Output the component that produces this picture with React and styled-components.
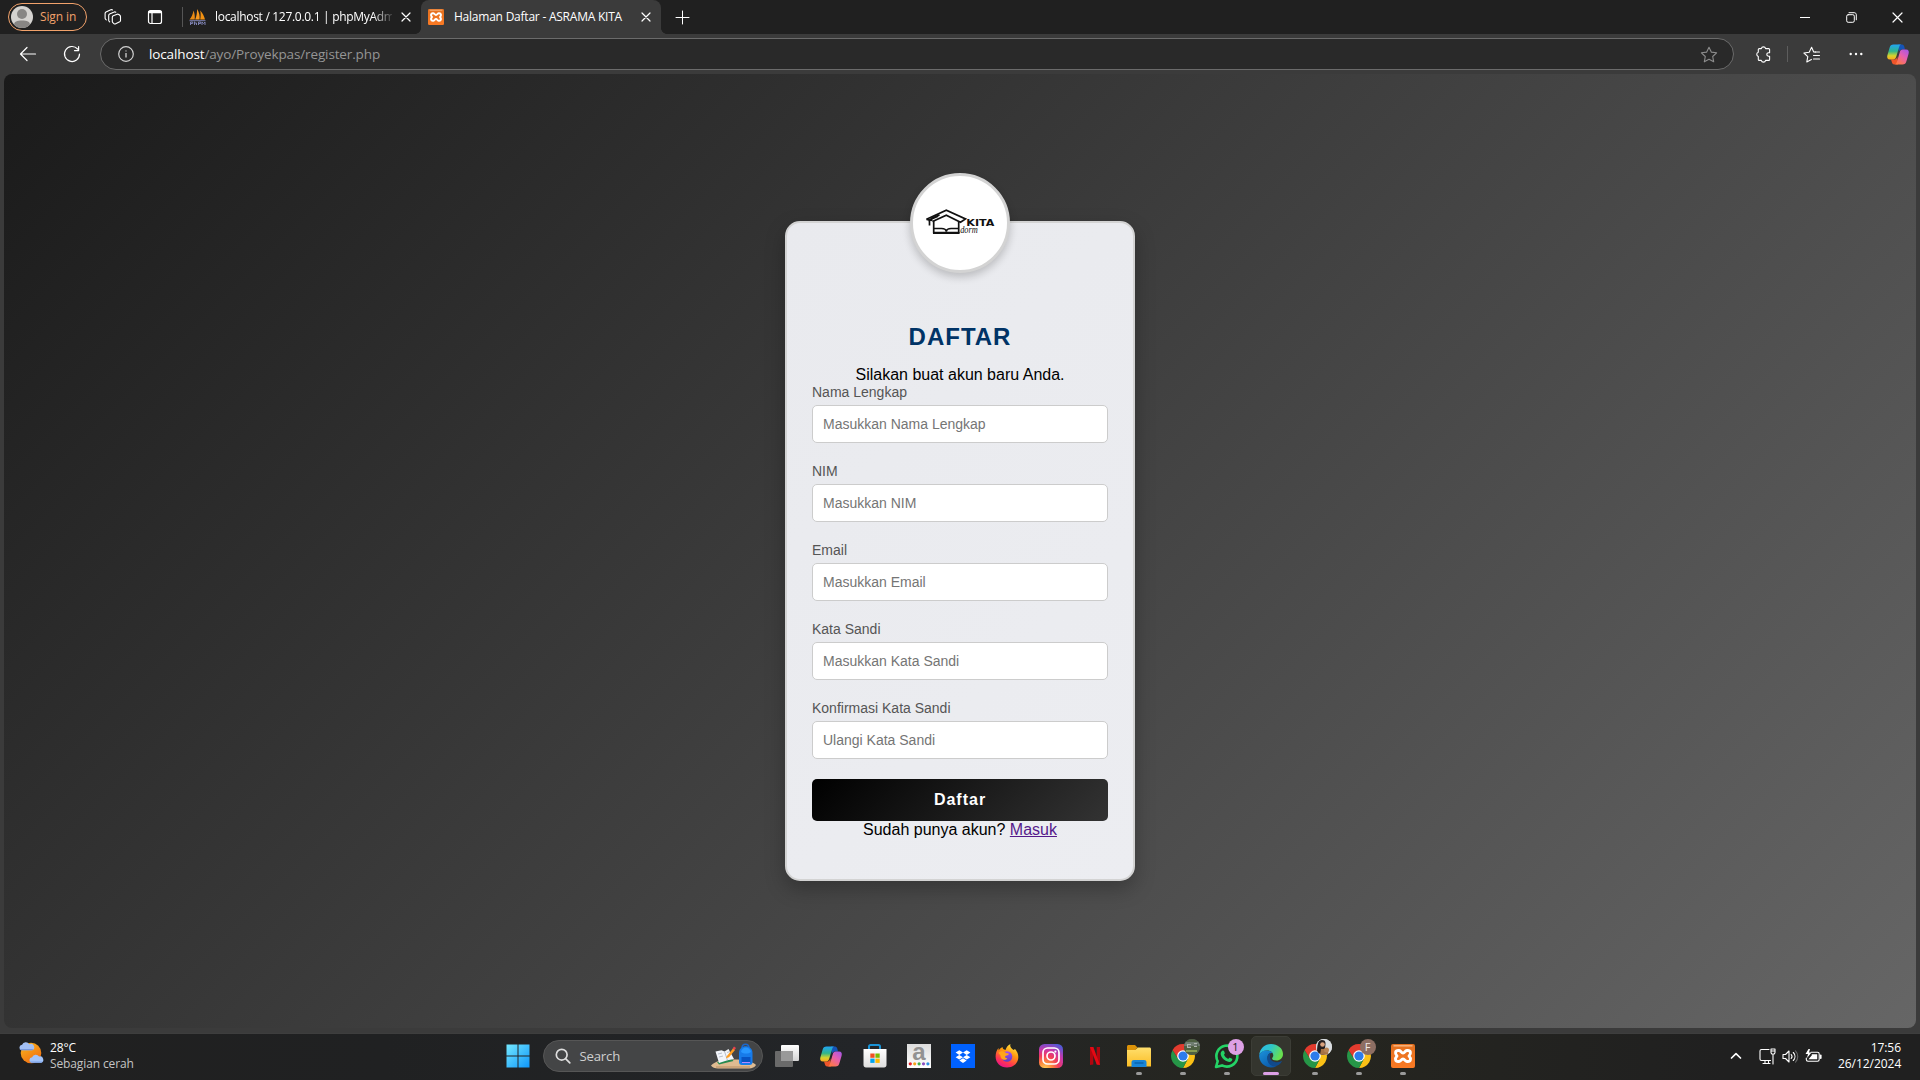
import React from "react";
import styled, { createGlobalStyle, css } from "styled-components";

const Global = createGlobalStyle`
  * { box-sizing: border-box; }
  html, body { margin: 0; padding: 0; }
  body { background: #3b3b3b; overflow: hidden; }
  svg { display: block; flex: none; overflow: visible; }
`;

const ui = css`
  font-family: "Open Sans", "Noto Sans", sans-serif;
`;

const Screen = styled.div`
  width: 1920px;
  height: 1080px;
  display: flex;
  flex-direction: column;
  background: #3b3b3b;
  overflow: hidden;
  ${ui}
`;

/* ---------- Title bar ---------- */
const TitleBar = styled.header`
  height: 34px;
  flex: none;
  display: flex;
  align-items: center;
  background: #202020;
  color: #fff;
`;
const SignIn = styled.button`
  width: 79px;
  height: 28px;
  margin-left: 8px;
  padding: 0 0 0 2px;
  display: flex;
  align-items: center;
  gap: 7px;
  border: 1px solid #f2a26b;
  border-radius: 14px;
  background: transparent;
  color: #f2a26b;
  font-size: 12px;
  letter-spacing: -0.12px;
  line-height: 16px;
  white-space: nowrap;
  ${ui}
`;
const BarIcon = styled.div`
  width: ${(p) => p.$w}px;
  height: 100%;
  flex: none;
  display: flex;
  align-items: center;
  justify-content: center;
`;
const TabDivider = styled.div`
  width: 1px;
  height: 20px;
  margin-left: 11px;
  background: #555;
`;
const Tab = styled.div`
  height: 34px;
  width: ${(p) => p.$w}px;
  flex: none;
  display: flex;
  align-items: center;
  padding: 0 ${(p) => p.$pr}px 0 ${(p) => p.$pl}px;
  border-radius: 8px 8px 0 0;
  background: ${(p) => (p.$active ? "#3b3b3b" : "transparent")};
  gap: ${(p) => p.$gap}px;
`;
const TabFlare = styled.div`
  width: 6px;
  height: 34px;
  flex: none;
  background: radial-gradient(circle at ${(p) => (p.$left ? "0 28px" : "6px 28px")}, #202020 5.6px, #3b3b3b 6.2px);
  clip-path: inset(28px 0 0 0);
`;
const TabTitle = styled.span`
  flex: 1;
  min-width: 0;
  white-space: nowrap;
  font-size: 12px;
  line-height: 16px;
  letter-spacing: ${(p) => p.$ls}px;
  color: #fff;
  ${(p) => p.$fade && css`mask-image: linear-gradient(90deg, #000 89%, rgba(0, 0, 0, 0.15));`}
`;
const WindowControls = styled.div`
  margin-left: auto;
  height: 100%;
  display: flex;
`;

/* ---------- Tool bar ---------- */
const ToolBar = styled.nav`
  height: 40px;
  flex: none;
  display: flex;
  align-items: center;
  padding-left: 6px;
  background: #3b3b3b;
`;
const Address = styled.div`
  width: 1634px;
  height: 32px;
  flex: none;
  margin-left: 6px;
  padding: 0 15px 0 17px;
  display: flex;
  align-items: center;
  border: 1px solid #6b6b6b;
  border-radius: 16px;
  background: #292929;
`;
const Url = styled.div`
  flex: 1;
  margin-left: 15px;
  font-size: 13.5px;
  line-height: 20px;
  letter-spacing: -0.13px;
  color: #959595;
  b { font-weight: 400; color: #fff; }
`;
const ToolDivider = styled.div`
  width: 1px;
  height: 16px;
  margin-left: -5px;
  background: #5d5d5d;
`;

/* ---------- Page ---------- */
const Frame = styled.div`
  height: 959px;
  flex: none;
  padding: 0 4px 5px;
`;
const Page = styled.main`
  height: 954px;
  display: flex;
  justify-content: center;
  align-items: center;
  border-radius: 8px;
  background: linear-gradient(135deg, #1a1a1a, #666666);
  font-family: "Liberation Sans", Arial, sans-serif;
`;
const Card = styled.section`
  position: relative;
  width: 350px;
  height: 660px;
  padding: 100px 25px 40px;
  border: 2px solid #d3d3d3;
  border-radius: 15px;
  background: linear-gradient(135deg, #e9eaee, #ecedf1);
  box-shadow: 0 8px 20px rgba(0, 0, 0, 0.25);
  text-align: center;
`;
const Logo = styled.div`
  position: absolute;
  top: -50px;
  left: 50%;
  width: 100px;
  height: 100px;
  margin-left: -50px;
  border: 3px solid #d3d3d3;
  border-radius: 50%;
  background: #fff;
  box-shadow: 0 4px 8px rgba(0, 0, 0, 0.2);
`;
const Title = styled.h2`
  margin: 0 0 15px;
  font-size: 24px;
  line-height: 28px;
  letter-spacing: 1px;
  color: #003366;
`;
const Note = styled.p`
  margin: 0;
  font-size: 16px;
  line-height: 18px;
  color: #000;
  a { color: #551a8b; }
`;
const Field = styled.div`
  margin-bottom: 20px;
  text-align: left;
`;
const Label = styled.label`
  display: block;
  margin-bottom: 5px;
  font-size: 14px;
  line-height: 16px;
  color: #555;
`;
const Input = styled.input`
  display: block;
  width: 100%;
  height: 38px;
  padding: 10px;
  border: 1px solid #ccc;
  border-radius: 5px;
  background: #fff;
  font: 14px "Liberation Sans", Arial, sans-serif;
  &::placeholder { color: #757575; }
`;
const Submit = styled.button`
  display: block;
  width: 100%;
  height: 42px;
  padding: 12px;
  border: 0;
  border-radius: 5px;
  background: linear-gradient(135deg, #000, #333);
  color: #fff;
  font: bold 16px/18px "Liberation Sans", Arial, sans-serif;
  letter-spacing: 1px;
`;

/* ---------- Task bar ---------- */
const TaskBar = styled.footer`
  height: 47px;
  flex: none;
  display: grid;
  grid-template-columns: 1fr auto 1fr;
  background: linear-gradient(90deg, #202020 0%, #202122 20%, #232528 45%, #26261f 66%, #232320 78%, #202020 90%);
  box-shadow: inset 0 1px #3e3e3e;
  color: #fff;
`;
const Weather = styled.div`
  display: flex;
  padding: 8px 0 0 18px;
  gap: 6px;
  font-size: 12px;
  line-height: 16px;
  letter-spacing: -0.12px;
  span { display: block; }
  span + span { color: #c4c4c4; }
`;
const WeatherText = styled.div`
  margin-top: -1px;
`;
const Apps = styled.div`
  display: flex;
  height: 46px;
`;
const AppCell = styled.div`
  position: relative;
  width: 44px;
  height: 46px;
  display: flex;
  align-items: center;
  justify-content: center;
`;
const ActiveTile = styled.div`
  width: 40px;
  height: 40px;
  display: flex;
  align-items: center;
  justify-content: center;
  border: 1px solid #3c3d36;
  border-radius: 5px;
  background: #34352e;
`;
const RunDot = styled.i`
  position: absolute;
  left: 50%;
  bottom: 4px;
  width: ${(p) => (p.$active ? 16 : 6)}px;
  height: 3px;
  transform: translateX(-50%);
  border-radius: 2px;
  background: ${(p) => (p.$active ? "#dda0e5" : "#9a9a9a")};
`;
const Badge = styled.span`
  position: absolute;
  right: 5px;
  top: 6px;
  width: 16px;
  height: 16px;
  border-radius: 50%;
  background: ${(p) => p.$bg};
  color: ${(p) => p.$fg};
  font-size: 11px;
  line-height: 16px;
  text-align: center;
  overflow: hidden;
`;
const SearchBox = styled.div`
  width: 220px;
  height: 32px;
  margin: 7px 2px 0 3px;
  padding: 0 6px 0 11px;
  display: flex;
  align-items: center;
  border: 1px solid #565656;
  border-radius: 16px;
  background: #444546;
  color: #cfcfcf;
  font-size: 13.2px;
  letter-spacing: -0.2px;
  span { flex: 1; margin-left: 9px; }
`;
const Tray = styled.div`
  display: flex;
  justify-content: flex-end;
  align-items: center;
  padding: 0 19px 1px 0;
`;
const TrayIcons = styled.div`
  display: flex;
  align-items: center;
  gap: 6px;
  margin: 0 16px 0 17px;
`;
const Clock = styled.div`
  text-align: right;
  font-size: 12px;
  line-height: 16px;
  letter-spacing: -0.05px;
  width: 63px;
  white-space: nowrap;
`;

/* ---------- Icons ---------- */
const line = { fill: "none", stroke: "#fff", strokeWidth: 1.1, strokeLinecap: "round", strokeLinejoin: "round" };

const Close = ({ s = 8 }) => (
  <svg width={s + 2} height={s + 2} viewBox={`0 0 ${s + 2} ${s + 2}`} {...line} strokeWidth="1.2">
    <path d={`M1 1L${s + 1} ${s + 1}M${s + 1} 1L1 ${s + 1}`} />
  </svg>
);
const Avatar = () => (
  <svg width="22" height="22" viewBox="0 0 22 22">
    <clipPath id="av"><circle cx="11" cy="11" r="11" /></clipPath>
    <g clipPath="url(#av)">
      <rect width="22" height="22" fill="#d5d3d0" />
      <circle cx="11" cy="8" r="5" fill="#888684" />
      <path d="M3 19c0-3.600 3-4.500 8-4.500s8 .9 8 4.500l-3 3H6z" fill="#888684" />
    </g>
  </svg>
);
const Workspaces = () => (
  <svg width="18" height="18" viewBox="0 0 18 18" {...line}>
    <path d="M8.300 9.200c0-.7.300-1.100.9-1.400l4-1.600c.6-.2 1.100 0 1.600.3l1 .8c.5.400.7.8.7 1.400v3.800c0 .6-.3 1-.8 1.300l-4 2c-.6.3-1.100.2-1.600-.1l-1-.8c-.5-.4-.8-.8-.8-1.400z" />
    <path d="M5.700 13.900l-.5-.5c-.3-.3-.5-.7-.5-1.200V7.500c0-.7.300-1.200.9-1.500l4.600-2c.6-.3 1.100-.2 1.600.2" />
    <path d="M2.300 11.800l-.6-.5c-.4-.4-.6-.8-.6-1.300V5.500c0-.7.300-1.200.9-1.500l4.800-2.200c.6-.2 1.200-.2 1.700.2" />
  </svg>
);
const TabActions = () => (
  <svg width="16" height="16" viewBox="0 0 16 16" {...line} strokeWidth="1.200">
    <rect x="1.500" y="1.500" width="13" height="13" rx="2" />
    <path d="M2.500 3h11" strokeWidth="2.600" />
    <path d="M5 4v10" />
  </svg>
);
const PmaIcon = () => (
  <svg width="17" height="17" viewBox="0 0 17 17">
    <path d="M.5 10.500C2.500 8.500 4 5 4.500 1.500c1.200 3 1.600 6 1.200 9z" fill="#e98a14" />
    <path d="M6.200 10.500C7.500 7.500 8.200 3.500 8 0c2.200 3 3 7 2.600 10.500z" fill="#f8981d" />
    <path d="M11.200 10.500c.6-3 .6-6 0-9 2.300 2.600 4.200 6 4.800 9z" fill="#f29111" />
    <path d="M.5 11.700h16M1.500 16v-3h2.200v1.500H1.500M5.500 12.500V16M5.500 14h2v2M9.500 16v-3h2.200v1.500H9.500M13 16v-3l1.500 1.500L16 13v3" fill="none" stroke="#7d80b0" strokeWidth="1" />
  </svg>
);
const Xampp = ({ s }) => (
  <svg width={s} height={s} viewBox="0 0 24 24">
    <defs><linearGradient id="xa" x2="0" y2="1"><stop stopColor="#e2701f" /><stop offset="1" stopColor="#fb7a24" /></linearGradient></defs>
    <rect width="24" height="24" rx="2" fill="url(#xa)" />
    <path d="M2.500 1.800h19" stroke="#f8b27c" strokeWidth="1.500" />
    <path
      d="M8 6.500C4 6 3.600 9.500 6 12 3.600 14.500 4 18 8 17.500c2.400-.3 2-2.500 4-2.500s1.600 2.200 4 2.500c4 .5 4.400-3 2-5.500 2.400-2.500 2-6-2-5.500-2.400.3-2 2.500-4 2.500S10.400 6.800 8 6.500z"
      fill="none" stroke="#fff" strokeWidth="2.900" strokeLinejoin="round"
    />
  </svg>
);
const Plus = () => (
  <svg width="15" height="15" viewBox="0 0 15 15" {...line} strokeWidth="1"><path d="M7.500 1v13M1 7.500h13" /></svg>
);
const Minimize = () => (
  <svg width="10" height="10" viewBox="0 0 10 10"><path d="M0 5.500h10" stroke="#fff" /></svg>
);
const Restore = () => (
  <svg width="11" height="11" viewBox="0 0 11 11" {...line} strokeWidth="1">
    <rect x=".7" y="2.700" width="7.600" height="7.600" rx="1.500" />
    <path d="M3 .7h5.200c1.300 0 2.100.8 2.100 2.100v5" />
  </svg>
);
const Back = () => (
  <svg width="18" height="16" viewBox="0 0 18 16" {...line} strokeWidth="1.200"><path d="M8 1.500L1.500 8 8 14.500M1.500 8h15" /></svg>
);
const Reload = () => (
  <svg width="18" height="18" viewBox="0 0 18 18" {...line} strokeWidth="1.200">
    <path d="M16.500 9A7.500 7.500 0 1 1 14.600 4M15.600 1.500V5.600H11.500" />
  </svg>
);
const Info = () => (
  <svg width="16" height="16" viewBox="0 0 16 16" fill="none" stroke="#d2d2d2" strokeWidth="1.200">
    <circle cx="8" cy="8" r="7.300" /><path d="M8 7v4.500" strokeWidth="1.300" /><circle cx="8" cy="4.900" r=".6" fill="#d2d2d2" stroke="none" />
  </svg>
);
const Star = () => (
  <svg width="18" height="17" viewBox="0 0 18 17" fill="none" stroke="#8c8c8c" strokeWidth="1.100" strokeLinejoin="round">
    <path d="M9 1.200l2.300 4.900 5.300.7-3.900 3.700 1 5.300L9 13.200l-4.700 2.600 1-5.300L1.400 6.800l5.300-.7z" />
  </svg>
);
const Puzzle = () => (
  <svg width="17" height="17" viewBox="0 0 17 17" {...line}>
    <path d="M6.300 3.300a2.200 2.200 0 0 1 4.300 0h3c.6 0 1 .4 1 1v3.100h-1a1.700 1.700 0 1 0 0 3.500h1v3.200c0 .6-.4 1-1 1h-3a2.200 2.200 0 0 1-4.300 0h-2c-.6 0-1-.4-1-1v-3a2.200 2.200 0 0 1 0-4.200V4.300c0-.6.4-1 1-1z" transform="translate(0 -.7)" />
  </svg>
);
const Favorites = () => (
  <svg width="18" height="17" viewBox="0 0 18 17" {...line}>
    <path d="M12.700 6h-2L8.600 1.300 6.200 6.200.9 7l3.900 3.700-1 5.200 4.600-2.500" />
    <path d="M12 6h4.500M10.500 9.500h6M10.500 13h6" />
  </svg>
);
const Dots = () => (
  <svg width="14" height="4" viewBox="0 0 14 4" fill="#fff"><circle cx="1.700" cy="2" r="1.200" /><circle cx="7" cy="2" r="1.200" /><circle cx="12.300" cy="2" r="1.200" /></svg>
);
const Copilot = ({ id }) => (
  <svg width="22" height="21" viewBox="0 0 22 21">
    <defs>
      <linearGradient id={id + "a"} x2="0" y2="1"><stop stopColor="#21a5f5" /><stop offset=".45" stopColor="#2fb58b" /><stop offset=".75" stopColor="#d5d42c" /><stop offset="1" stopColor="#ffa51f" /></linearGradient>
      <linearGradient id={id + "b"} x1="1" x2=".3" y2="1"><stop stopColor="#a055ed" /><stop offset=".5" stopColor="#e75fae" /><stop offset="1" stopColor="#ff7846" /></linearGradient>
    </defs>
    <path d="M11 .5h4c1.400 0 2 1 2.400 2.500L18 5.500h-3c-1.800 0-2.600.9-3.100 2.700z" fill="#1554b8" />
    <path d="M11 20.500H7.200c-1.400 0-2-1-2.400-2.500L4 15.500h3.400c1.600 0 2.300-1 2.900-3z" fill="#ef552a" />
    <path d="M6.500.5H14c-1.200.4-1.600 1.500-2 2.900L9.300 12.600c-.6 2-1.400 2.900-3 2.900H3c-2.500 0-3.300-1.700-2.600-4.200l2.200-7.600C3.200 1.600 4.300.5 6.500.5z" fill={`url(#${id}a)`} />
    <path d="M15.500 20.500H8c1.200-.4 1.600-1.500 2-2.900l2.700-9.200c.6-2 1.400-2.900 3-2.900H19c2.500 0 3.300 1.700 2.600 4.200l-2.200 7.600c-.6 2.100-1.700 3.200-3.900 3.200z" fill={`url(#${id}b)`} />
  </svg>
);
const KitaLogo = () => (
  <svg width="94" height="94" viewBox="0 0 94 94">
    <g fill="none" stroke="#111" strokeWidth="1.700" strokeLinejoin="miter">
      <path d="M13.500 43.300L33.300 34.300 52.500 43l-5 3.200L33.300 39.200 19.500 45.500" />
      <path d="M13.500 43.300l6 1.200M16.500 44v5.500M17.500 42.800l9-3.900M15 44.500l10-4.300M20.700 45v11.500h25V45.500" />
      <path d="M21 52.500h7.500c2.700 0 4.500 1 4.800 3 .3-2 2.100-3 4.800-3h7.500" />
      <path d="M20 57h26.500" strokeWidth="2" />
    </g>
    <text x="53.300" y="49.600" fontFamily="DejaVu Sans, sans-serif" fontWeight="700" fontSize="9.500" textLength="28" lengthAdjust="spacingAndGlyphs" fill="#111">KITA</text>
    <text x="47.200" y="57" fontFamily="Liberation Serif, serif" fontStyle="italic" fontSize="10" textLength="17.500" lengthAdjust="spacingAndGlyphs" fill="#111">dorm</text>
  </svg>
);
const WeatherIcon = () => (
  <svg width="26" height="24" viewBox="0 0 26 24">
    <defs><linearGradient id="sun" x1=".2" x2=".8" y2="1"><stop stopColor="#f9b31c" /><stop offset="1" stopColor="#f06a12" /></linearGradient></defs>
    <circle cx="13" cy="12" r="10.300" fill="url(#sun)" />
    <path d="M3.500 9.300a2.800 2.800 0 0 1 .6-5.500 4 4 0 0 1 7.200-.6 3 3 0 0 1 3 6.100z" fill="#a3c0f5" />
    <path d="M3.500 9.300a2.700 2.700 0 0 1-1.800-1.200h13.700l-1.100 1.200z" fill="#7798dd" />
    <path d="M13.500 21.700a2.800 2.800 0 0 1 .6-5.500 4 4 0 0 1 7-.6 3 3 0 0 1 2 6.100z" fill="#a3c5fb" />
    <path d="M13.500 21.700a2.700 2.700 0 0 1-2-1.200H25l-1.900 1.200z" fill="#7da2e8" />
  </svg>
);
const Start = () => (
  <svg width="24" height="24" viewBox="0 0 24 24">
    <defs><linearGradient id="win" gradientUnits="userSpaceOnUse" x1="0" y1="0" x2="24" y2="24"><stop stopColor="#76eaff" /><stop offset="1" stopColor="#0c94fa" /></linearGradient></defs>
    <path d="M.5.500h11v11H.5zM12.500.500h11v11h-11zM.5 12.500h11v11H.5zM12.500 12.500h11v11h-11z" fill="url(#win)" />
  </svg>
);
const Magnifier = () => (
  <svg width="16" height="16" viewBox="0 0 16 16" fill="none" stroke="#dedede" strokeWidth="1.700" strokeLinecap="round"><circle cx="6.700" cy="6.700" r="5.400" /><path d="M10.800 10.800l4 4" /></svg>
);
const SearchArt = () => (
  <svg width="45" height="25" viewBox="0 0 45 25">
    <path d="M0 21.500C4 17 12 15.500 23 15.500s20 2.500 22 5.500c-1 2-4 3.500-7 3.500H7c-3 0-6-1-7-3z" fill="#dfbb91" />
    <path d="M5 23h34" stroke="#b88e62" />
    <path d="M6 18l15-3 1.500 2L8 20.500z" fill="#278a51" />
    <path d="M4.500 7.500l6-1.300 3 1.200 4-2.400 5.500 10-6.500 1.300L8 19z" fill="#f3f5fa" />
    <path d="M13.500 7.400l3 9M7 10l4-1M8 13l4-1M16 8.500l3-1" stroke="#aab1c1" fill="none" strokeWidth=".8" />
    <path d="M15.500 12.500L22 4.500l2 1.600-6 7.200-3 1z" fill="#ff9d20" /><path d="M21.500 4.500L23 2.500l2 1.600-1.500 2z" fill="#e8434d" />
    <path d="M31 4c0-5 7-5 7 0" fill="none" stroke="#1c68cd" strokeWidth="1.500" />
    <path d="M28 9c0-9 13.500-9 13.500 0v9c0 2-1 3-3 3H31c-2 0-3-1-3-3z" fill="#177bea" />
    <path d="M30 8c1-6 9-6 10 0-3 2-7 2-10 0z" fill="#2897ff" />
    <path d="M30.500 13h9v4.500c0 1-1 1.500-2 1.500h-5c-1 0-2-.5-2-1.500z" fill="#0754c4" /><path d="M31 18.500h8" stroke="#b48aff" />
  </svg>
);
const TaskView = () => (
  <svg width="24" height="22" viewBox="0 0 24 22">
    <defs><linearGradient id="tv" x2="0" y2="1"><stop stopColor="#fff" /><stop offset="1" stopColor="#d4d4d4" /></linearGradient></defs>
    <rect x="6" width="18" height="16" rx="1" fill="url(#tv)" />
    <rect y="6" width="18" height="16" rx="1" fill="#6a6a6a" /><path d="M6 6h12v10H6z" fill="#999" />
  </svg>
);
const Store = () => (
  <svg width="24" height="24" viewBox="0 0 24 24">
    <defs><linearGradient id="st" x2="0" y2="1"><stop stopColor="#fff" /><stop offset="1" stopColor="#dedede" /></linearGradient></defs>
    <path d="M6 5V2.500C6 1.600 6.600 1 7.500 1h8c.9 0 1.500.6 1.500 1.500V5" fill="none" stroke="#1a93d6" strokeWidth="2" />
    <path d="M.5 5h23v16c0 1.600-.9 2.500-2.500 2.500H3C1.400 23.500.5 22.600.5 21z" fill="url(#st)" />
    <path d="M7.300 9.500h4.300v4.300H7.300z" fill="#f25022" /><path d="M12.400 9.500h4.300v4.300h-4.300z" fill="#7fba00" /><path d="M7.300 14.600h4.300v4.300H7.300z" fill="#00a4ef" /><path d="M12.400 14.600h4.300v4.300h-4.300z" fill="#ffb900" />
  </svg>
);
const LetterTile = () => (
  <svg width="24" height="24" viewBox="0 0 24 24">
    <defs><linearGradient id="am" x2="0" y2="1"><stop stopColor="#dcdcdc" /><stop offset="1" stopColor="#fff" /></linearGradient></defs>
    <rect width="24" height="24" fill="url(#am)" />
    <text x="12" y="15.500" textAnchor="middle" fontFamily="Liberation Sans, sans-serif" fontWeight="700" fontSize="24" fill="#929292">a</text>
    {["#e8232a", "#f6a31b", "#3fae49", "#8a4fc0", "#2c8fe0"].map((c, i) => <circle key={c} cx={3.3 + i * 4.4} cy="19.800" r="1.600" fill={c} />)}
  </svg>
);
const Dropbox = () => (
  <svg width="24" height="24" viewBox="0 0 24 24">
    <rect width="24" height="24" fill="#0061fe" />
    <path d="M8.300 6.200l3.700 2.300-3.700 2.400-3.700-2.400zM15.700 6.200l3.700 2.300-3.700 2.400L12 8.500zM8.300 10.900l3.700 2.400-3.700 2.300-3.700-2.300zM15.700 10.900l3.700 2.400-3.700 2.300-3.700-2.300zM12 14.200l3.700 2.200L12 18.900l-3.700-2.500z" fill="#fff" />
  </svg>
);
const Firefox = () => (
  <svg width="24" height="24" viewBox="0 0 24 24">
    <defs>
      <linearGradient id="ff" x1=".8" x2=".3" y2="1"><stop stopColor="#fff04a" /><stop offset=".4" stopColor="#ff980e" /><stop offset=".75" stopColor="#ff3750" /><stop offset="1" stopColor="#e8118c" /></linearGradient>
      <linearGradient id="fp" x2="0" y2="1"><stop stopColor="#a14bff" /><stop offset="1" stopColor="#5b3fc0" /></linearGradient>
    </defs>
    <path d="M15.500 0c-1 3 1 4 3 6l1.500-1c2.500 3 3.700 6 3.200 9.500C22.400 20 18 23.500 12 23.500 5.500 23.500.6 19 .6 12.500c0-3.500 1-6.500 3-8.500v2.500C4.500 5 5.800 3.800 7.500 3c0 1.500 1 2.500 3 3 1-3 2.500-5 5-6z" fill="url(#ff)" />
    <circle cx="12" cy="12.500" r="5.300" fill="url(#fp)" />
    <path d="M3.500 8.500C6 6.500 9 7 11 9c1 .5 2 .2 3 .8-.5 1.500-2 1.700-3.600 2.200-1 1 .2 2.500 2 2.300-1.500 2.200-5 2-6.400-.6C5 12 6 11 4 10z" fill="#ffa51a" />
  </svg>
);
const Instagram = () => (
  <svg width="24" height="24" viewBox="0 0 24 24">
    <defs>
      <radialGradient id="ig" cx=".25" cy="1.050" r="1.150"><stop stopColor="#ffd85c" /><stop offset=".25" stopColor="#fd8a3c" /><stop offset=".5" stopColor="#f13b5c" /><stop offset=".72" stopColor="#c837ab" /><stop offset="1" stopColor="#5259d6" /></radialGradient>
    </defs>
    <rect width="24" height="24" rx="5.500" fill="url(#ig)" />
    <g fill="none" stroke="#fff" strokeWidth="1.700"><rect x="4" y="4" width="16" height="16" rx="4.600" /><circle cx="12" cy="12" r="4" /></g>
    <circle cx="16.400" cy="7.600" r="1.100" fill="#fff" />
  </svg>
);
const Netflix = () => (
  <svg width="10" height="18" viewBox="0 0 10 18">
    <path d="M0 0h3.300v17.500L0 18zM6.700 0H10v18l-3.300-.5z" fill="#b1060f" /><path d="M0 0h3.300L10 18l-3.300-.5z" fill="#e50914" />
  </svg>
);
const Explorer = () => (
  <svg width="24" height="22" viewBox="0 0 24 22">
    <defs><linearGradient id="fo" x2="0" y2="1"><stop stopColor="#ffdf6d" /><stop offset="1" stopColor="#fbbd25" /></linearGradient></defs>
    <path d="M0 1.500C0 .7.700 0 1.500 0H8l3 3h-1L8 5.500H0z" fill="#dc9308" />
    <path d="M0 5h8.200L11 2.500h11.500c.9 0 1.500.6 1.500 1.500v17.500H0z" fill="url(#fo)" />
    <path d="M4.500 22v-4.500c0-1.800 1-2.500 2.500-2.500h10c1.500 0 2.500.7 2.500 2.500V22z" fill="#1885d8" /><path d="M7.500 18h9" stroke="#075fa9" strokeWidth="1.300" />
  </svg>
);
const Chrome = () => (
  <svg width="24" height="24" viewBox="0 0 24 24">
    <path d="M12 6.400h10.600A12 12 0 0 1 12 24l4.900-9.200z" fill="#fbc116" />
    <path d="M7.150 14.800L1.610 6A12 12 0 0 0 12 24l4.850-9.200z" fill="#269647" />
    <path d="M1.610 6A12 12 0 0 1 22.600 6.400H12l-4.850 8.400z" fill="#e33b2e" />
    <circle cx="12" cy="12" r="5.800" fill="#fff" /><circle cx="12" cy="12" r="4.600" fill="#2c7cec" />
  </svg>
);
const WhatsApp = () => (
  <svg width="25" height="25" viewBox="0 0 25 25">
    <path d="M2 23l1.700-5.800A10.500 10.500 0 1 1 8 21.400z" fill="none" stroke="#24d366" strokeWidth="2.600" strokeLinejoin="round" />
    <path d="M8.200 6.700c.7-.5 1.500-.4 1.800.4l.8 2c.2.500-.4 1.200-.8 1.700.8 1.900 2.200 3.200 4.200 4.100.6-.7 1.100-1.500 1.700-1.200l2.200 1.100c.5.300.2 1.500-.4 2.100-1.500 1.500-3.700 1.200-6-.1-2.700-1.600-4.500-4-5-6.400-.2-1.500.4-3 1.500-3.700z" fill="#24d366" />
  </svg>
);
const Edge = () => (
  <svg width="24" height="24" viewBox="0 0 24 24">
    <defs>
      <linearGradient id="e1" x2="1" y2=".4"><stop stopColor="#2bb6ee" /><stop offset=".5" stopColor="#2fc6c8" /><stop offset="1" stopColor="#68e04f" /></linearGradient>
      <linearGradient id="e2" x2=".7" y2="1"><stop stopColor="#1b93dc" /><stop offset="1" stopColor="#0b58a7" /></linearGradient>
    </defs>
    <path d="M.2 11C.8 4.500 5.800 0 12 0c6.500 0 12 4.400 12 10 0 4-3 6.500-6.500 6.500-3 0-4.400-1-4.400-2 0-.8 1.200-1.200 1.200-3C14.300 8.500 11.500 6.500 8 6.500c-3.500 0-6.300 1.500-7.800 4.500z" fill="url(#e1)" />
    <path d="M.1 12C.6 8.500 4 6.500 7.800 6.500c2.700 0 4.700 1 5.700 2.500-3-.6-5 1.500-5 4.500 0 5 4 9 9 8.700A12 12 0 0 1 .1 12z" fill="url(#e2)" />
    <path d="M9 11c-2.500 5 1 11 6.500 11.500 3.500-.6 6-2.500 7.300-5 .1-.5-.3-.6-.7-.3-4.600 2.300-10.600.3-11.100-4C10.900 11.500 11 10 12 9c-1.200.1-2.400.8-3 2z" fill="#114a8b" />
  </svg>
);
const PhotoA = () => (
  <svg width="16" height="16" viewBox="0 0 16 16"><rect width="16" height="16" fill="#4e6041" /><path d="M0 3h16v4H0z" fill="#6f7d70" /><path d="M3 5h4v4H3zM10 4h3v4h-3z" fill="#aeb5ac" /><path d="M4 7h3M10 6h4" stroke="#344234" /><path d="M2 12h11" stroke="#879c53" strokeWidth="2" /></svg>
);
const PhotoB = () => (
  <svg width="16" height="16" viewBox="0 0 16 16"><rect width="16" height="16" fill="#d9dde0" /><path d="M1 16C1 5 2 1 6 1s4 3 3 8l-1 7z" fill="#241e20" /><circle cx="6.500" cy="5.500" r="2.300" fill="#d9a27e" /><path d="M5 10h6l2 6H4z" fill="#a87345" /><circle cx="10.500" cy="11" r="2.500" fill="#b98455" /></svg>
);
const Chevron = () => (
  <svg width="12" height="8" viewBox="0 0 12 8" {...line} strokeWidth="1.700"><path d="M1.500 6L6 1.700 10.500 6" /></svg>
);
const Network = () => (
  <svg width="17" height="17" viewBox="0 0 17 17" {...line}><path d="M10 1.500H2.500c-.8 0-1.500.7-1.500 1.500v8c0 .8.700 1.500 1.500 1.500h9M4 15.500h7M6 12.500v3M9.500 12.500v3" /><path d="M12 1h4v3.500c0 1-.8 1.700-2 1.700s-2-.7-2-1.700zM14 6.500V16M12 3h4" /></svg>
);
const Volume = () => (
  <svg width="17" height="15" viewBox="0 0 17 15" {...line}><path d="M1 5.500v4h2.500L7 13V2L3.500 5.500zM9.200 5.500c1 1.200 1 2.800 0 4M11.300 3.500c2.200 2.300 2.200 5.700 0 8" /><path d="M13.500 1.800c3 3 3 8.500 0 11.400" stroke="#686868" /></svg>
);
const Battery = () => (
  <svg width="17" height="15" viewBox="0 0 17 15" {...line}><path d="M6 3.200h6.500c1 0 1.700.7 1.700 1.700v5.600c0 1-.7 1.700-1.700 1.700H3c-1 0-1.700-.7-1.700-1.700V9" /><path d="M6.500 5.200h5.700v5H3.500L7 6z" fill="#fff" stroke="none" /><path d="M15.700 6.500v2.500" strokeWidth="1.800" /><path d="M3.500 0L.5 5H3l-1 4 4.500-5.500H4L5 0z" fill="#fff" stroke="none" /></svg>
);

const fields = [
  ["Nama Lengkap", "Masukkan Nama Lengkap", "text"],
  ["NIM", "Masukkan NIM", "text"],
  ["Email", "Masukkan Email", "email"],
  ["Kata Sandi", "Masukkan Kata Sandi", "password"],
  ["Konfirmasi Kata Sandi", "Ulangi Kata Sandi", "password"],
];

const apps = [
  { icon: <TaskView /> },
  { icon: <Copilot id="t" /> },
  { icon: <Store /> },
  { icon: <LetterTile /> },
  { icon: <Dropbox /> },
  { icon: <Firefox /> },
  { icon: <Instagram /> },
  { icon: <Netflix /> },
  { icon: <Explorer />, run: true },
  { icon: <Chrome />, run: true, badge: <PhotoA />, bg: "#556" },
  { icon: <WhatsApp />, run: true, badge: "1", bg: "#dda0e5", fg: "#222" },
  { icon: <Edge />, run: true, active: true },
  { icon: <Chrome />, run: true, badge: <PhotoB />, bg: "#ddd" },
  { icon: <Chrome />, run: true, badge: "F", bg: "#8d6e63", fg: "#f1e8e4" },
  { icon: <Xampp s={24} />, run: true },
];

export default function App() {
  return (
    <>
      <Global />
      <Screen>
        <TitleBar>
          <SignIn><Avatar />Sign in</SignIn>
          <BarIcon $w={52}><Workspaces /></BarIcon>
          <BarIcon $w={32}><TabActions /></BarIcon>
          <TabDivider />
          <Tab $w={232} $pl={6} $pr={4} $gap={9}>
            <PmaIcon />
            <TabTitle $fade $ls={-0.3}>localhost / 127.0.0.1 | phpMyAdm</TabTitle>
            <Close />
          </Tab>
          <TabFlare $left />
          <Tab $active $w={240} $pl={7} $pr={10} $gap={10}>
            <Xampp s={16} />
            <TabTitle $ls={-0.23}>Halaman Daftar - ASRAMA KITA</TabTitle>
            <Close />
          </Tab>
          <TabFlare />
          <BarIcon $w={31}><Plus /></BarIcon>
          <WindowControls>
            <BarIcon $w={46}><Minimize /></BarIcon>
            <BarIcon $w={46}><Restore /></BarIcon>
            <BarIcon $w={46}><Close s={9} /></BarIcon>
          </WindowControls>
        </TitleBar>
        <ToolBar>
          <BarIcon $w={44}><Back /></BarIcon>
          <BarIcon $w={44}><Reload /></BarIcon>
          <Address>
            <Info />
            <Url><b>localhost</b>/ayo/Proyekpas/register.php</Url>
            <Star />
          </Address>
          <BarIcon $w={58}><Puzzle /></BarIcon>
          <ToolDivider />
          <BarIcon $w={48}><Favorites /></BarIcon>
          <BarIcon $w={40}><Dots /></BarIcon>
          <BarIcon $w={44}><Copilot id="b" /></BarIcon>
        </ToolBar>
        <Frame>
          <Page>
            <Card>
              <Logo><KitaLogo /></Logo>
              <Title>DAFTAR</Title>
              <Note>Silakan buat akun baru Anda.</Note>
              {fields.map(([label, hint, type]) => (
                <Field key={label}>
                  <Label>{label}</Label>
                  <Input type={type} placeholder={hint} />
                </Field>
              ))}
              <Submit>Daftar</Submit>
              <Note>Sudah punya akun? <a href="#masuk">Masuk</a></Note>
            </Card>
          </Page>
        </Frame>
        <TaskBar>
          <Weather>
            <WeatherIcon />
            <WeatherText><span>28°C</span><span>Sebagian cerah</span></WeatherText>
          </Weather>
          <Apps>
            <AppCell><Start /></AppCell>
            <SearchBox><Magnifier /><span>Search</span><SearchArt /></SearchBox>
            {apps.map((a, i) => (
              <AppCell key={i}>
                {a.active ? <ActiveTile>{a.icon}</ActiveTile> : a.icon}
                {a.badge && <Badge $bg={a.bg} $fg={a.fg}>{a.badge}</Badge>}
                {a.run && <RunDot $active={a.active} />}
              </AppCell>
            ))}
          </Apps>
          <Tray>
            <Chevron />
            <TrayIcons><Network /><Volume /><Battery /></TrayIcons>
            <Clock>17:56<br />26/12/2024</Clock>
          </Tray>
        </TaskBar>
      </Screen>
    </>
  );
}
